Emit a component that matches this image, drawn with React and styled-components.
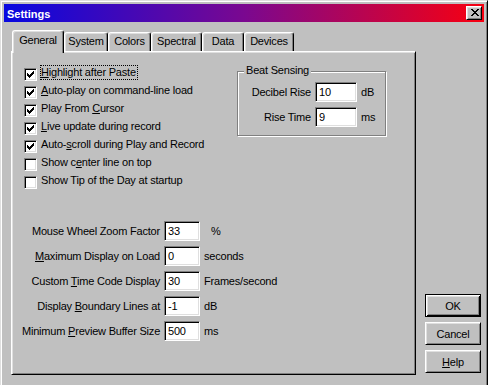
import React from 'react';
import styled, {createGlobalStyle, css} from 'styled-components';

const GlobalStyle = createGlobalStyle`
  html, body {
    margin: 0;
    padding: 0;
    overflow: hidden;
    background: #c0c0c0;
  }
  body {
    font-family: "Liberation Sans", Arial, sans-serif;
    font-size: 11px;
    letter-spacing: -0.2px;
    color: #000;
  }
`;

const raised = css`
  border: 1px solid;
  border-color: #fff #000 #000 #fff;
  box-shadow: inset 1px 1px #dfdfdf, inset -1px -1px #808080;
`;

const sunken = css`
  border: 1px solid;
  border-color: #808080 #fff #fff #808080;
  box-shadow: inset 1px 1px #000, inset -1px -1px #dfdfdf;
`;

const Window = styled.div`
  box-sizing: border-box;
  width: 488px;
  height: 390px;
  padding: 3px;
  background: #c0c0c0;
  border: 1px solid;
  border-color: #dfdfdf #000 #000 #dfdfdf;
  box-shadow: inset 1px 1px #fff, inset -1px -1px #808080;
  display: flex;
  flex-direction: column;
`;

const TitleBar = styled.div`
  height: 18px;
  display: flex;
  align-items: center;
  justify-content: space-between;
  padding: 0 2px 0 3px;
  background: linear-gradient(90deg, #0808e0 0%, #7a0890 50%, #f80010 100%);
`;

const Title = styled.span`
  color: #fff;
  font-weight: bold;
  font-size: 11px;
  letter-spacing: 0;
  line-height: 18px;
  padding-top: 1px;
`;

const CloseButton = styled.div`
  box-sizing: border-box;
  width: 16px;
  height: 14px;
  background: #c0c0c0;
  ${raised};
  display: flex;
  align-items: center;
  justify-content: center;
  padding: 0 0 1px 1px;
`;

const Body = styled.div`
  display: flex;
  gap: 9px;
  padding: 8px 0 0 7px;
`;

const Main = styled.div`
  width: 405px;
  display: flex;
  flex-direction: column;
`;

const TabRow = styled.div`
  display: flex;
  align-items: flex-end;
  height: 21px;
  padding-left: 1px;
  position: relative;
  z-index: 2;
`;

const Tab = styled.div`
  box-sizing: border-box;
  width: ${p => p.$width}px;
  height: ${p => (p.$active ? 23 : 19)}px;
  margin-bottom: ${p => (p.$active ? -2 : 0)}px;
  background: #c0c0c0;
  border-top: 1px solid #fff;
  border-left: 1px solid #fff;
  border-right: 1px solid #000;
  border-radius: 3px 3px 0 0;
  box-shadow: inset -1px 0 #808080, inset 1px 1px #dfdfdf;
  text-align: center;
  line-height: 13px;
  padding-top: ${p => (p.$active ? 3 : 2)}px;
`;

const Panel = styled.div`
  box-sizing: border-box;
  height: 324px;
  ${raised};
  padding: 16px 0 0 12px;
`;

const TopSection = styled.div`
  display: flex;
  align-items: flex-start;
`;

const CheckList = styled.div`
  width: 212px;
  display: flex;
  flex-direction: column;
`;

const CheckRow = styled.div`
  height: 18px;
  display: flex;
  align-items: flex-start;
  gap: 4px;
  white-space: nowrap;
`;

const Box = styled.div`
  box-sizing: border-box;
  width: 13px;
  height: 13px;
  flex: none;
  background: #fff;
  ${sunken};
  display: flex;
  align-items: center;
  justify-content: center;
`;

const CheckLabel = styled.span`
  line-height: 13px;
  margin-top: -2px;
  padding: 0 1px 0 0;
  outline: ${p => (p.$focused ? '1px dotted #000' : 'none')};
`;

const U = styled.span`
  text-decoration: underline;
`;

const GroupBox = styled.div`
  box-sizing: border-box;
  position: relative;
  width: 149px;
  height: 65px;
  margin: 3px 0 0 1px;
  border: 1px solid #808080;
  box-shadow: inset 1px 1px #fff, 1px 1px #fff;
  padding-top: 10px;
`;

const Legend = styled.span`
  position: absolute;
  top: -8px;
  left: 6px;
  padding: 0 2px;
  background: #c0c0c0;
  line-height: 13px;
`;

const FieldGrid = styled.div`
  display: grid;
  grid-template-columns: ${p => p.$columns};
  column-gap: 4px;
  row-gap: 5px;
  align-items: center;
  white-space: nowrap;
`;

const FieldLabel = styled.span`
  text-align: right;
  line-height: 13px;
`;

const Input = styled.div`
  box-sizing: border-box;
  height: 20px;
  background: #fff;
  ${sunken};
  padding: 3px 0 0 3px;
  line-height: 13px;
`;

const Unit = styled.span`
  padding-left: ${p => p.$indent || 0}px;
  line-height: 13px;
`;

const Fields = styled(FieldGrid)`
  margin: 27px 0 0 -2px;
`;

const ButtonColumn = styled.div`
  display: flex;
  flex-direction: column;
  justify-content: flex-end;
  gap: 5px;
  padding-bottom: 2px;
`;

const Button = styled.div`
  box-sizing: border-box;
  width: 56px;
  height: 23px;
  display: flex;
  align-items: center;
  justify-content: center;
  background: #c0c0c0;
  ${p => p.$default
    ? css`
      border: 1px solid #000;
      box-shadow: inset 1px 1px #fff, inset -1px -1px #000, inset 2px 2px #dfdfdf, inset -2px -2px #808080;
    `
    : raised};
`;

const CloseGlyph = () => (
  <svg width="8" height="7" viewBox="0 0 8 7" shapeRendering="crispEdges">
    <path
      d="M0 0h2v1h-2zM6 0h2v1h-2zM1 1h2v1h-2zM5 1h2v1h-2zM2 2h4v1h-4zM3 3h2v1h-2zM2 4h4v1h-4zM1 5h2v1h-2zM5 5h2v1h-2zM0 6h2v1h-2zM6 6h2v1h-2z"
      fill="#000"
    />
  </svg>
);

const CheckGlyph = () => (
  <svg width="7" height="7" viewBox="0 0 7 7" shapeRendering="crispEdges">
    <path
      d="M6 0h1v3h-1zM5 1h1v3h-1zM4 2h1v3h-1zM3 3h1v3h-1zM2 4h1v3h-1zM1 3h1v3h-1zM0 2h1v3h-1z"
      fill="#000"
    />
  </svg>
);

const tabs = [
  {label: 'General', width: 52},
  {label: 'System', width: 44},
  {label: 'Colors', width: 43},
  {label: 'Spectral', width: 51},
  {label: 'Data', width: 42},
  {label: 'Devices', width: 50},
];

const checks = [
  {label: <><U>H</U>ighlight after Paste</>, checked: true, focused: true},
  {label: <><U>A</U>uto-play on command-line load</>, checked: true},
  {label: <>Play From <U>C</U>ursor</>, checked: true},
  {label: <><U>L</U>ive update during record</>, checked: true},
  {label: <>Auto-<U>s</U>croll during Play and Record</>, checked: true},
  {label: <>Show c<U>e</U>nter line on top</>, checked: false},
  {label: <>Show Tip of the Day at startup</>, checked: false},
];

const beat = [
  {label: 'Decibel Rise', value: '10', unit: 'dB'},
  {label: 'Rise Time', value: '9', unit: 'ms'},
];

const fields = [
  {label: 'Mouse Wheel Zoom Factor', value: '33', unit: '%', indent: 7},
  {label: <><U>M</U>aximum Display on Load</>, value: '0', unit: 'seconds'},
  {label: <>Custom <U>T</U>ime Code Display</>, value: '30', unit: 'Frames/second'},
  {label: <>Display <U>B</U>oundary Lines at</>, value: '-1', unit: 'dB'},
  {label: <>Minimum <U>P</U>review Buffer Size</>, value: '500', unit: 'ms'},
];

const Checkbox = ({label, checked, focused}) => (
  <CheckRow>
    <Box>{checked && <CheckGlyph />}</Box>
    <CheckLabel $focused={focused}>{label}</CheckLabel>
  </CheckRow>
);

const App = () => (
  <>
    <GlobalStyle />
    <Window>
      <TitleBar>
        <Title>Settings</Title>
        <CloseButton><CloseGlyph /></CloseButton>
      </TitleBar>
      <Body>
        <Main>
          <TabRow>
            {tabs.map((tab, i) => (
              <Tab key={tab.label} $width={tab.width} $active={i === 0}>{tab.label}</Tab>
            ))}
          </TabRow>
          <Panel>
            <TopSection>
              <CheckList>
                {checks.map((item, i) => <Checkbox key={i} {...item} />)}
              </CheckList>
              <GroupBox>
                <Legend>Beat Sensing</Legend>
                <FieldGrid $columns="73px 42px 1fr">
                  {beat.map(row => (
                    <React.Fragment key={row.label}>
                      <FieldLabel>{row.label}</FieldLabel>
                      <Input>{row.value}</Input>
                      <Unit>{row.unit}</Unit>
                    </React.Fragment>
                  ))}
                </FieldGrid>
              </GroupBox>
            </TopSection>
            <Fields $columns="138px 36px 1fr">
              {fields.map((row, i) => (
                <React.Fragment key={i}>
                  <FieldLabel>{row.label}</FieldLabel>
                  <Input>{row.value}</Input>
                  <Unit $indent={row.indent}>{row.unit}</Unit>
                </React.Fragment>
              ))}
            </Fields>
          </Panel>
        </Main>
        <ButtonColumn>
          <Button $default>OK</Button>
          <Button>Cancel</Button>
          <Button><span><U>H</U>elp</span></Button>
        </ButtonColumn>
      </Body>
    </Window>
  </>
);

export default App;
